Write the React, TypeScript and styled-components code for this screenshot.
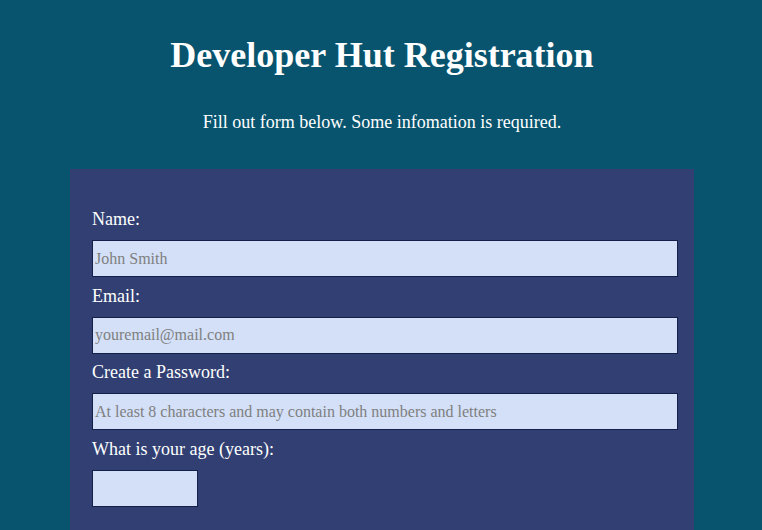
import React from "react";
import styled, { createGlobalStyle } from "styled-components";

const Global = createGlobalStyle`
  html, body { margin: 0; padding: 0; }
  body {
    background: #08546e;
    font-family: "Liberation Serif", "Times New Roman", serif;
    color: #ffffff;
  }
`;

const Page = styled.div`
  display: flex;
  flex-direction: column;
  align-items: center;
  min-height: 530px;
  padding-left: 2px;
`;

const Title = styled.h1`
  margin: 33px 0 0;
  font-size: 36px;
  line-height: 44px;
  font-weight: bold;
  text-align: center;
`;

const Subtitle = styled.p`
  margin: 35px 0 0;
  font-size: 18px;
  line-height: 20px;
  text-align: center;
`;

const Form = styled.form`
  box-sizing: border-box;
  width: 624px;
  margin-top: 37px;
  padding: 40px 16px 30px 22px;
  background: #313f72;
  display: flex;
  flex-direction: column;
  align-items: flex-start;
  min-height: 400px;
`;

const Label = styled.label`
  display: block;
  font-size: 18px;
  line-height: normal;
  margin-bottom: 10px;
`;

const Input = styled.input<{ $w?: number }>`
  box-sizing: border-box;
  width: ${(p) => (p.$w ? `${p.$w}px` : "100%")};
  height: 37px;
  margin: 0 0 8.7px;
  padding: 0 2px;
  border: 1px solid #15204a;
  background: #d3e0f8;
  font-family: "Liberation Serif", "Times New Roman", serif;
  font-size: 16px;
  color: #222;
  outline: none;
  &::placeholder { color: #7f7f7f; }
`;

export default function App() {
  return (
    <>
      <Global />
      <Page>
        <Title>Developer Hut Registration</Title>
        <Subtitle>Fill out form below. Some infomation is required.</Subtitle>
        <Form onSubmit={(e) => e.preventDefault()}>
          <Label htmlFor="name">Name:</Label>
          <Input id="name" type="text" placeholder="John Smith" />
          <Label htmlFor="email">Email:</Label>
          <Input id="email" type="email" placeholder="youremail@mail.com" />
          <Label htmlFor="pw">Create a Password:</Label>
          <Input id="pw" type="password" placeholder="At least 8 characters and may contain both numbers and letters" />
          <Label htmlFor="age">What is your age (years):</Label>
          <Input id="age" type="number" $w={106} />
        </Form>
      </Page>
    </>
  );
}
